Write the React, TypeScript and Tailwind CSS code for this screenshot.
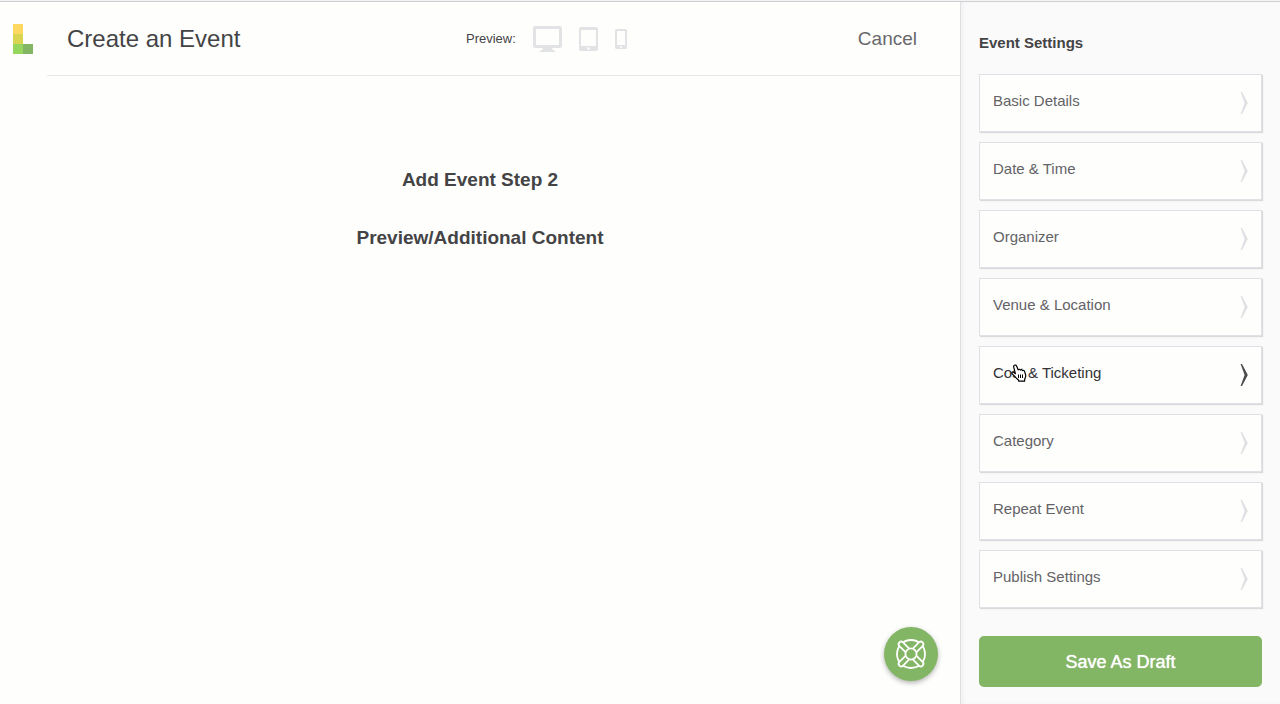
import type { ReactNode } from "react";

const sections = [
  "Basic Details",
  "Date & Time",
  "Organizer",
  "Venue & Location",
  "Cost & Ticketing",
  "Category",
  "Repeat Event",
  "Publish Settings",
];

const activeSection = "Cost & Ticketing";

function Logo() {
  return (
    <svg width="20" height="30" viewBox="0 0 20 30" aria-hidden="true">
      <rect width="10" height="10" fill="#ffd862" />
      <rect y="10" width="10" height="10" fill="#d9d452" />
      <rect y="20" width="10" height="10" fill="#95d65c" />
      <rect x="10" y="20" width="10" height="10" fill="#82b564" />
    </svg>
  );
}

function DesktopIcon() {
  return (
    <svg width="29" height="26" viewBox="0 0 29 26" aria-hidden="true">
      <path
        fillRule="evenodd"
        fill="currentColor"
        d="M2.500 0h24A2.500 2.500 0 0 1 29 2.500v17a2.500 2.500 0 0 1-2.500 2.500H19l.8 2 2.700 1.200v.8H6.500v-.8L9.200 24l.8-2H2.500A2.500 2.500 0 0 1 0 19.500v-17A2.500 2.500 0 0 1 2.500 0zM3 3v16h23V3z"
      />
    </svg>
  );
}

function TabletIcon() {
  return (
    <svg width="19" height="24" viewBox="0 0 19 24" aria-hidden="true">
      <path
        fillRule="evenodd"
        fill="currentColor"
        d="M2.500 0h14A2.500 2.500 0 0 1 19 2.500v19a2.500 2.500 0 0 1-2.500 2.500h-14A2.500 2.500 0 0 1 0 21.500v-19A2.500 2.500 0 0 1 2.500 0zM2 3v16h15V3zM9.500 20.200a1.300 1.300 0 1 0 0 2.600 1.300 1.300 0 0 0 0-2.600z"
      />
    </svg>
  );
}

function PhoneIcon() {
  return (
    <svg width="12" height="20" viewBox="0 0 12 20" aria-hidden="true">
      <path
        fillRule="evenodd"
        fill="currentColor"
        d="M1.500 0h9A1.500 1.500 0 0 1 12 1.500v17a1.500 1.500 0 0 1-1.500 1.500h-9A1.500 1.500 0 0 1 0 18.500v-17A1.500 1.500 0 0 1 1.500 0zM2 2v14h8V2zM6 17a1 1 0 1 0 0 2 1 1 0 0 0 0-2z"
      />
    </svg>
  );
}

function Chevron() {
  return (
    <svg width="8" height="22" viewBox="0 0 8 22" aria-hidden="true">
      <path fill="currentColor" d="M.6 0H2l5.800 11L2 22H.6l4-11z" />
    </svg>
  );
}

function LifeRing() {
  return (
    <svg
      width="30"
      height="30"
      viewBox="0 0 30 30"
      fill="#82b564"
      stroke="currentColor"
      strokeWidth="1.800"
      aria-hidden="true"
    >
      <circle cx="15" cy="15" r="14" />
      {[45, 135, 225, 315].map((angle) => (
        <path
          key={angle}
          transform={`rotate(${angle} 15 15)`}
          d="M12.400 9.500V1.200Q12.400-1.400 15-1.400T17.600 1.200V9.500"
        />
      ))}
      <circle cx="15" cy="15" r="5.600" />
    </svg>
  );
}

function HandCursor() {
  return (
    <svg width="16" height="18" viewBox="0 0 16 18" aria-hidden="true">
      <path
        fill="#fff"
        stroke="#000"
        strokeWidth="1.200"
        strokeLinejoin="round"
        d="M3.400 1.200c.9-.5 1.800 0 2.200.9l1.500 3.700c.6-.7 1.900-.6 2.300.3.600-.6 1.700-.4 2.100.5.700-.4 1.800 0 2.100 1l1 3.200c.3 1.200 0 2.400-.5 3.400l-.5 1.300v1.700H7.800l-.5-1.500c-1.300-.7-2.500-2-3.500-3.300L1 9.700c-.8-1.300.7-2.200 1.700-1.400l1.700 1.400-1.700-6.600c-.2-.8 0-1.500.7-1.900z"
      />
      <path stroke="#000" strokeWidth="1" d="M7.500 10.500v3.500M9.500 10.500v3.500M11.500 10.500v3.500" />
    </svg>
  );
}

function PreviewButton({ label, children }: { label: string; children: ReactNode }) {
  return (
    <button type="button" aria-label={label} className="text-[#e2e3e5]">
      {children}
    </button>
  );
}

export default function App() {
  return (
    <div className="flex min-h-screen flex-col bg-[#fefefd] font-['Liberation_Sans',Arial,sans-serif] text-[#444446]">
      <div className="h-0.5 border-b border-[#d0d0d3] bg-[#f3f3f5]" />
      <div className="flex grow">
        <div className="relative flex w-3/4 flex-col">
          <header className="flex">
            <a href="#" aria-label="Home" className="w-[47px] pt-[22px] pl-[13px]">
              <Logo />
            </a>
            <div className="grid h-[74px] grow grid-cols-[11fr_auto_8fr] items-center border-b border-[#e8e8ea] pr-[43px] pl-5">
              <h1 className="text-2xl">Create an Event</h1>
              <div className="flex items-center gap-[17px]">
                <span className="text-[13px]">Preview:</span>
                <PreviewButton label="Desktop">
                  <DesktopIcon />
                </PreviewButton>
                <PreviewButton label="Tablet">
                  <TabletIcon />
                </PreviewButton>
                <PreviewButton label="Phone">
                  <PhoneIcon />
                </PreviewButton>
              </div>
              <a href="#" className="justify-self-end text-[19px] leading-7 text-[#68686b]">
                Cancel
              </a>
            </div>
          </header>

          <main className="flex flex-col items-center gap-[30px] pt-[90px] text-[19px] leading-7 font-bold">
            <h2>Add Event Step 2</h2>
            <h2>Preview/Additional Content</h2>
          </main>

          <button
            type="button"
            aria-label="Help"
            className="absolute right-[22px] bottom-[23px] flex size-[54px] items-center justify-center rounded-full bg-[#82b564] text-white shadow-[0_2px_5px_rgba(0,0,0,0.3)]"
          >
            <LifeRing />
          </button>
        </div>

        <aside className="w-1/4 border-l border-[#dedfe3] bg-[#fafafb] px-[18px] pt-[30px] shadow-[inset_3px_0_3px_rgba(0,0,30,0.03)]">
          <h2 className="mb-5 text-[15px] leading-[22px] font-bold">Event Settings</h2>
          <ul className="flex flex-col gap-[10px]">
            {sections.map((name) => {
              const active = name === activeSection;
              return (
                <li key={name} className="relative">
                  <button
                    type="button"
                    className={`flex h-[58px] w-full items-center justify-between border border-[#e0e1e5] bg-[#fefefd] px-[13px] text-left text-[15px] shadow-[1px_1px_1px_#d9dade] ${
                      active ? "text-[#333335]" : "text-[#636366]"
                    }`}
                  >
                    <span className="pb-1">{name}</span>
                    <span className={active ? "text-[#4a4a4c]" : "text-[#dfe0e3]"}>
                      <Chevron />
                    </span>
                  </button>
                  {active && (
                    <span className="pointer-events-none absolute top-[18px] left-8">
                      <HandCursor />
                    </span>
                  )}
                </li>
              );
            })}
          </ul>
          <button
            type="button"
            className="mt-7 mb-[17px] h-[51px] w-full rounded-[5px] bg-[#82b564] text-lg text-white [text-shadow:0_0_1px_#fff]"
          >
            Save As Draft
          </button>
        </aside>
      </div>
    </div>
  );
}
